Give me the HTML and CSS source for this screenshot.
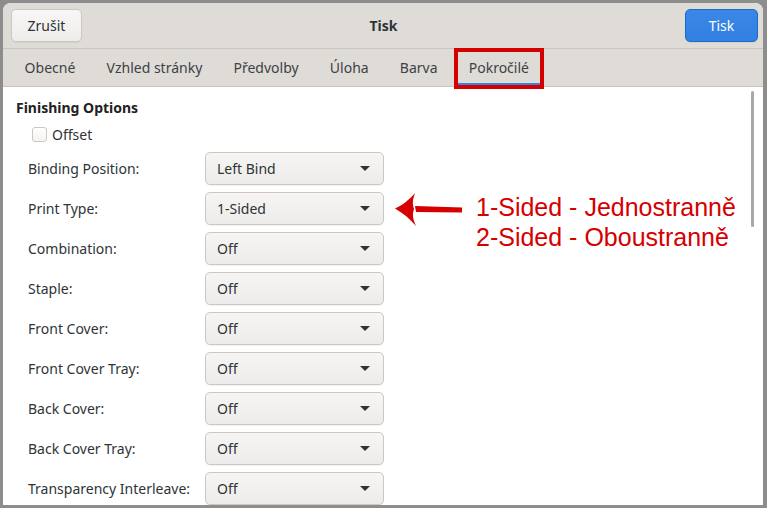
FILE: index.html
```html
<!DOCTYPE html>
<html lang="cs">
<head>
<meta charset="utf-8">
<link rel="stylesheet" href="styles.css">
</head>
<body>
<div class="window">
  <header class="headerbar">
    <button class="btn">Zrušit</button>
    <div class="title">Tisk</div>
    <button class="btn btn-blue">Tisk</button>
  </header>
  <nav class="tabs">
    <span class="tab">Obecné</span>
    <span class="tab">Vzhled stránky</span>
    <span class="tab">Předvolby</span>
    <span class="tab">Úloha</span>
    <span class="tab">Barva</span>
    <span class="tab active">Pokročilé</span>
  </nav>
  <main class="content">
    <div class="section-title">Finishing Options</div>
    <label class="check"><span class="box"></span>Offset</label>
    <div class="rows">
      <div class="row"><span class="lbl">Binding Position:</span><div class="combo">Left Bind<i class="caret"></i></div></div>
      <div class="row"><span class="lbl">Print Type:</span><div class="combo">1-Sided<i class="caret"></i></div></div>
      <div class="row"><span class="lbl">Combination:</span><div class="combo">Off<i class="caret"></i></div></div>
      <div class="row"><span class="lbl">Staple:</span><div class="combo">Off<i class="caret"></i></div></div>
      <div class="row"><span class="lbl">Front Cover:</span><div class="combo">Off<i class="caret"></i></div></div>
      <div class="row"><span class="lbl">Front Cover Tray:</span><div class="combo">Off<i class="caret"></i></div></div>
      <div class="row"><span class="lbl">Back Cover:</span><div class="combo">Off<i class="caret"></i></div></div>
      <div class="row"><span class="lbl">Back Cover Tray:</span><div class="combo">Off<i class="caret"></i></div></div>
      <div class="row"><span class="lbl">Transparency Interleave:</span><div class="combo">Off<i class="caret"></i></div></div>
    </div>
    <div class="scrollbar"></div>
  </main>
  <div class="highlight"></div>
  <svg class="arrow" width="72" height="34" viewBox="0 0 72 34">
    <path d="M67 14.5 L20 13 L21 19 L67 19.5 Z" fill="#d60000"/>
    <path d="M0 15.5 C8 12 15 6 20 0 C18 6 17 10 19 16 C17 22 18 26 21 33 C15 26 8 20 0 15.5 Z" fill="#d60000"/>
  </svg>
  <div class="note">1-Sided - Jednostranně<br>2-Sided - Oboustranně</div>
</div>
</body>
</html>
```

FILE: styles.css
```css
html, body {
  margin: 0;
  padding: 0;
  height: 100%;
  overflow: hidden;
}
body {
  background: #8d8d8d;
  font-family: "Noto Sans", "DejaVu Sans", sans-serif;
  font-size: 14px;
  color: #2e3436;
}
.window {
  position: relative;
  margin: 3px 4px 0 3px;
  height: 502px;
  background: #fff;
  border-radius: 8px 8px 0 0;
  overflow: hidden;
  display: flex;
  flex-direction: column;
}
.headerbar {
  height: 45px;
  flex: none;
  display: flex;
  align-items: center;
  justify-content: space-between;
  padding: 0 5px 0 8px;
  background: #dfdcd8;
  border-bottom: 1px solid #cbc5bf;
}
.btn {
  font-family: inherit;
  font-size: 14px;
  height: 33px;
  width: 71px;
  padding: 0;
  border-radius: 5px;
  border: 1px solid #cdc7c2;
  background: linear-gradient(#f8f7f6, #efedec);
  color: #2e3436;
  box-shadow: 0 1px 1px rgba(0,0,0,0.06);
}
.btn-blue {
  width: 73px;
  background: linear-gradient(#3a87e6, #3180e2);
  border-color: #1c69c9;
  color: #fff;
}
.title {
  font-weight: bold;
  font-size: 14px;
  color: #2e3436;
}
.tabs {
  height: 37px;
  flex: none;
  display: flex;
  align-items: stretch;
  padding-left: 6px;
  background: #dfdcd8;
  border-bottom: 1px solid #cbc5bf;
}
.tab {
  display: flex;
  align-items: center;
  padding: 0 15.6px;
  color: #3d4244;
  position: relative;
}
.tab.active::after {
  content: "";
  position: absolute;
  left: 5px;
  right: 5px;
  bottom: 1px;
  height: 2px;
  background: #3584e4;
}
.content {
  flex: 1;
  position: relative;
  padding: 10px 0 0 13px;
  background: #fff;
}
.section-title {
  font-weight: bold;
  color: #222;
  line-height: 22px;
}
.check {
  display: flex;
  align-items: center;
  margin: 5px 0 0 16px;
  height: 20px;
  gap: 5px;
  color: #2e3436;
}
.box {
  width: 13px;
  height: 13px;
  border: 1px solid #cdc7c2;
  border-radius: 3px;
  background: linear-gradient(#fff, #f4f3f2);
}
.rows {
  margin-top: 8px;
  display: flex;
  flex-direction: column;
  gap: 7px;
}
.row {
  display: flex;
  align-items: center;
  height: 33px;
  padding-left: 12px;
}
.lbl {
  width: 177px;
  color: #2e3436;
}
.combo {
  width: 155px;
  height: 31px;
  padding: 0 11px;
  display: flex;
  align-items: center;
  justify-content: space-between;
  border: 1px solid #cdc7c2;
  border-radius: 5px;
  background: linear-gradient(#f6f5f4, #eeecea);
  box-shadow: 0 1px 1px rgba(0,0,0,0.05);
  color: #2e3436;
}
.caret {
  width: 0;
  height: 0;
  border-left: 5px solid transparent;
  border-right: 5px solid transparent;
  border-top: 5px solid #2e3436;
  margin-right: 2px;
}
.scrollbar {
  position: absolute;
  right: 9px;
  top: 4px;
  width: 3px;
  height: 136px;
  background: #a9a9a9;
  border-radius: 2px;
}
.highlight {
  position: absolute;
  left: 451px;
  top: 45px;
  width: 82px;
  height: 33px;
  border: 4px solid #d40000;
}
.arrow {
  position: absolute;
  left: 392px;
  top: 190px;
}
.note {
  position: absolute;
  left: 473px;
  top: 189px;
  font-family: "Liberation Sans", Arial, sans-serif;
  font-size: 25px;
  line-height: 30px;
  color: #d60000;
}
```
